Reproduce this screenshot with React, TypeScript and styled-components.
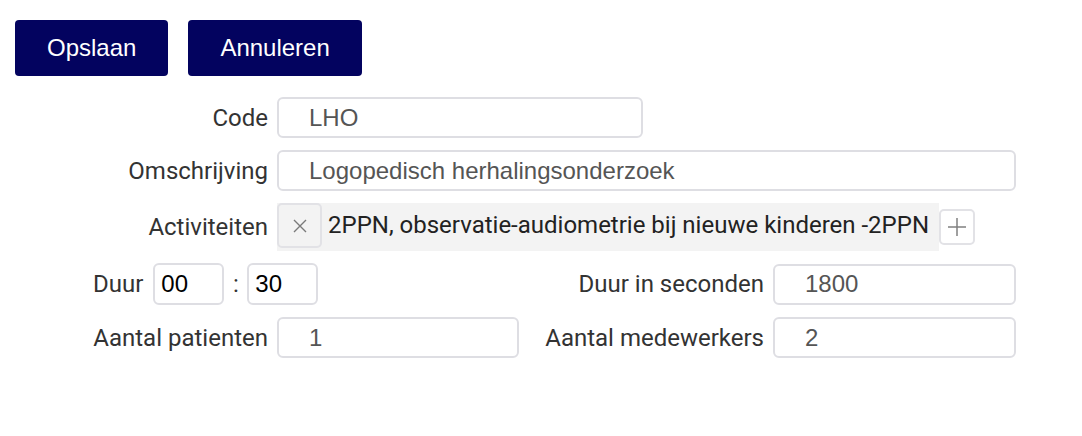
import React from 'react';
import styled, { createGlobalStyle } from 'styled-components';

const GlobalStyle = createGlobalStyle`
  body {
    margin: 0;
    background: #fff;
    font-family: Roboto, 'Liberation Sans', Arial, sans-serif;
  }
`;

const Page = styled.div`
  padding: 20px 15px;
`;

const Toolbar = styled.div`
  display: flex;
  gap: 20px;
`;

const Button = styled.button`
  height: 56px;
  padding: 0 32px;
  border: none;
  border-radius: 4px;
  background: #03035f;
  color: #fff;
  font-family: 'Liberation Sans', Arial, sans-serif;
  font-size: 24px;
  cursor: pointer;
`;

const Form = styled.div`
  display: grid;
  grid-template-columns: 175px 242px 236px 243px;
  column-gap: 9px;
  row-gap: 12px;
  margin: 21px 0 0 78px;
  align-items: center;
`;

const Label = styled.label`
  font-size: 24px;
  color: #333;
  text-align: right;
  white-space: nowrap;
`;

const Field = styled.div<{ $span?: number }>`
  grid-column: span ${(p) => p.$span ?? 1};
  display: flex;
  align-items: center;
`;

const TextInput = styled.input<{ $width?: number }>`
  box-sizing: border-box;
  width: ${(p) => (p.$width ? `${p.$width}px` : '100%')};
  height: 41px;
  padding: 0 30px;
  border: 2px solid #dedee3;
  border-radius: 6px;
  font-family: 'Liberation Sans', Arial, sans-serif;
  font-size: 24px;
  color: #555;
  outline: none;
`;

const Chip = styled.div`
  display: flex;
  align-items: flex-start;
  height: 48px;
  padding-right: 10px;
  background: #f3f3f3;
`;

const ChipRemove = styled.span`
  box-sizing: border-box;
  width: 45px;
  height: 45px;
  display: flex;
  align-items: center;
  justify-content: center;
  border: 2px solid #e2e2e6;
  border-radius: 5px;
  margin-right: 6px;
`;

const ChipText = styled.span`
  line-height: 45px;
  font-size: 24px;
  color: #222;
  white-space: nowrap;
`;

const AddButton = styled.span`
  box-sizing: border-box;
  width: 36px;
  height: 36px;
  display: flex;
  align-items: center;
  justify-content: center;
  border: 2px solid #e2e2e6;
  border-radius: 5px;
  background: #fff;
`;

const DuurGroup = styled.div`
  grid-column: span 2;
  display: flex;
  align-items: center;
`;

const TimeInput = styled.input`
  box-sizing: border-box;
  width: 71px;
  height: 42px;
  padding: 0 6px;
  border: 2px solid #dedee3;
  border-radius: 6px;
  font-family: 'Liberation Sans', Arial, sans-serif;
  font-size: 24px;
  color: #000;
  outline: none;
`;

const Colon = styled.span`
  width: 23px;
  text-align: center;
  font-size: 24px;
  color: #333;
`;

const DuurLabel = styled(Label)`
  margin-right: 10px;
`;

const Cross = () => (
  <svg width="14" height="14" viewBox="0 0 14 14">
    <path d="M1 1L13 13M13 1L1 13" stroke="#7a7a7a" strokeWidth="1.4" />
  </svg>
);

const Plus = () => (
  <svg width="20" height="20" viewBox="0 0 20 20">
    <path d="M10 1V19M1 10H19" stroke="#808080" strokeWidth="1.5" />
  </svg>
);

export default function App() {
  return (
    <Page>
      <GlobalStyle />
      <Toolbar>
        <Button>Opslaan</Button>
        <Button>Annuleren</Button>
      </Toolbar>
      <Form>
        <Label>Code</Label>
        <Field $span={3}>
          <TextInput $width={366} defaultValue="LHO" />
        </Field>

        <Label>Omschrijving</Label>
        <Field $span={3}>
          <TextInput defaultValue="Logopedisch herhalingsonderzoek" />
        </Field>

        <Label>Activiteiten</Label>
        <Field $span={3}>
          <Chip>
            <ChipRemove>
              <Cross />
            </ChipRemove>
            <ChipText>2PPN, observatie-audiometrie bij nieuwe kinderen -2PPN</ChipText>
          </Chip>
          <AddButton>
            <Plus />
          </AddButton>
        </Field>

        <DuurGroup>
          <DuurLabel>Duur</DuurLabel>
          <TimeInput defaultValue="00" />
          <Colon>:</Colon>
          <TimeInput defaultValue="30" />
        </DuurGroup>
        <Label>Duur in seconden</Label>
        <Field>
          <TextInput defaultValue="1800" />
        </Field>

        <Label>Aantal patienten</Label>
        <Field>
          <TextInput defaultValue="1" />
        </Field>
        <Label>Aantal medewerkers</Label>
        <Field>
          <TextInput defaultValue="2" />
        </Field>
      </Form>
    </Page>
  );
}
